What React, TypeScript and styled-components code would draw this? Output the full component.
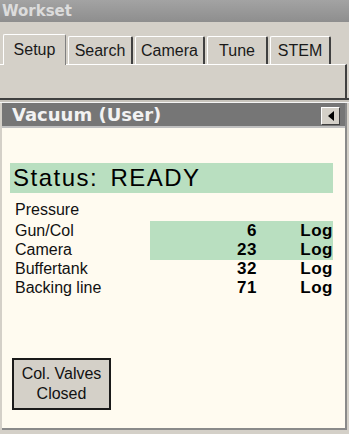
import styled, { createGlobalStyle } from "styled-components";

const GlobalStyle = createGlobalStyle`
  body {
    margin: 0;
    background: #d4d0c8;
    font-family: "Liberation Sans", Arial, sans-serif;
  }
`;

const Window = styled.div`
  width: 349px;
  height: 434px;
  display: flex;
  flex-direction: column;
  background: #d4d0c8;
  overflow: hidden;
`;

const TitleBar = styled.div`
  height: 22px;
  display: flex;
  align-items: center;
  padding-left: 2px;
  background: linear-gradient(#a3a3a3, #8e8e8e);
  color: #dcdcdc;
  font-family: "DejaVu Sans", sans-serif;
  font-weight: bold;
  font-size: 15px;
`;

const TabRow = styled.div`
  display: flex;
  align-items: flex-end;
  height: 42px;
  padding-left: 3px;
`;

const Tab = styled.div<{ $active?: boolean; $w: number }>`
  width: ${(p) => p.$w}px;
  height: ${(p) => (p.$active ? 31 : 28)}px;
  margin-right: 2px;
  display: flex;
  align-items: center;
  justify-content: center;
  box-sizing: border-box;
  background: #d4d0c8;
  border-top: 1px solid #ffffff;
  border-left: 1px solid #ffffff;
  border-right: 2px solid #404040;
  border-radius: 2px 2px 0 0;
  font-size: 16px;
  color: #1a1a1a;
  position: relative;
  z-index: ${(p) => (p.$active ? 2 : 1)};
  margin-bottom: ${(p) => (p.$active ? -1 : 0)}px;
  ${(p) => (p.$active ? "border-right-color: #808080; border-right-width: 1px;" : "")}
`;

const TabPage = styled.div`
  height: 33px;
  margin-right: 2px;
  border-top: 1px solid #ffffff;
  border-right: 2px solid #404040;
  background: #d4d0c8;
`;

const Divider = styled.div`
  height: 5px;
  border-top: 2px solid #404040;
  border-bottom: 1px solid #f4f4f4;
  background: #c8c4bc;
  box-sizing: border-box;
`;

const Panel = styled.div`
  flex: 1;
  display: flex;
  flex-direction: column;
  margin: 0 2px 4px 2px;
  border-right: 2px solid #8a8a8a;
  border-bottom: 2px solid #8a8a8a;
`;

const PanelHeader = styled.div`
  height: 23px;
  display: flex;
  align-items: center;
  justify-content: space-between;
  padding: 0 5px 0 10px;
  background: #767676;
  color: #f2f2f2;
  font-family: "DejaVu Sans", sans-serif;
  font-weight: bold;
  font-size: 18px;
  border-bottom: 2px solid #c0c0c0;
`;

const ArrowButton = styled.div`
  width: 19px;
  height: 18px;
  box-sizing: border-box;
  display: flex;
  align-items: center;
  justify-content: center;
  background: #d4d0c8;
  border-top: 1px solid #ffffff;
  border-left: 1px solid #ffffff;
  border-right: 1px solid #404040;
  border-bottom: 1px solid #404040;
  margin-top: 3px;
`;

const Content = styled.div`
  flex: 1;
  background: #fffbf0;
  padding: 35px 12px 0 8px;
  display: flex;
  flex-direction: column;
`;

const StatusBar = styled.div`
  height: 30px;
  display: flex;
  align-items: center;
  padding-left: 3px;
  background: #b9dfc0;
  font-size: 24px;
  letter-spacing: 1.5px;
  word-spacing: 4px;
  color: #000;
`;

const Label = styled.div`
  margin: 8px 0 2px 5px;
  font-size: 16px;
  color: #111;
`;

const Row = styled.div`
  display: grid;
  grid-template-columns: 140px 1fr;
  height: 19px;
  font-size: 16px;
  color: #111;
`;

const RowName = styled.div`
  padding-left: 5px;
  display: flex;
  align-items: center;
`;

const RowData = styled.div<{ $hot?: boolean }>`
  display: grid;
  grid-template-columns: 107px 1fr;
  align-items: center;
  background: ${(p) => (p.$hot ? "#b9dfc0" : "transparent")};
  font-weight: bold;
  font-size: 17px;
  letter-spacing: 0.5px;
  color: #000;
`;

const Value = styled.span`
  text-align: right;
`;

const LogText = styled.span`
  text-align: right;
`;

const ValveButton = styled.div`
  margin: 61px 0 0 2px;
  width: 99px;
  height: 52px;
  box-sizing: border-box;
  display: flex;
  align-items: center;
  justify-content: center;
  text-align: center;
  background: #d4d0c8;
  border: 2px solid #1a1a1a;
  font-size: 16px;
  line-height: 20px;
  color: #111;
`;

const tabs = [
  { name: "Setup", w: 63 },
  { name: "Search", w: 65 },
  { name: "Camera", w: 70 },
  { name: "Tune", w: 61 },
  { name: "STEM", w: 61 },
];

const rows = [
  { name: "Gun/Col", value: "6", hot: true },
  { name: "Camera", value: "23", hot: true },
  { name: "Buffertank", value: "32", hot: false },
  { name: "Backing line", value: "71", hot: false },
];

export default function App() {
  return (
    <Window>
      <GlobalStyle />
      <TitleBar>Workset</TitleBar>
      <TabRow>
        {tabs.map((t, i) => (
          <Tab key={t.name} $w={t.w} $active={i === 0}>
            {t.name}
          </Tab>
        ))}
      </TabRow>
      <TabPage />
      <Divider />
      <Panel>
        <PanelHeader>
          <span>Vacuum (User)</span>
          <ArrowButton>
            <svg width="6" height="10" viewBox="0 0 6 10">
              <polygon points="6,0 0,5 6,10" fill="#000" />
            </svg>
          </ArrowButton>
        </PanelHeader>
        <Content>
          <StatusBar>Status: READY</StatusBar>
          <Label>Pressure</Label>
          {rows.map((r) => (
            <Row key={r.name}>
              <RowName>{r.name}</RowName>
              <RowData $hot={r.hot}>
                <Value>{r.value}</Value>
                <LogText>Log</LogText>
              </RowData>
            </Row>
          ))}
          <ValveButton>
            Col. Valves
            <br />
            Closed
          </ValveButton>
        </Content>
      </Panel>
    </Window>
  );
}
